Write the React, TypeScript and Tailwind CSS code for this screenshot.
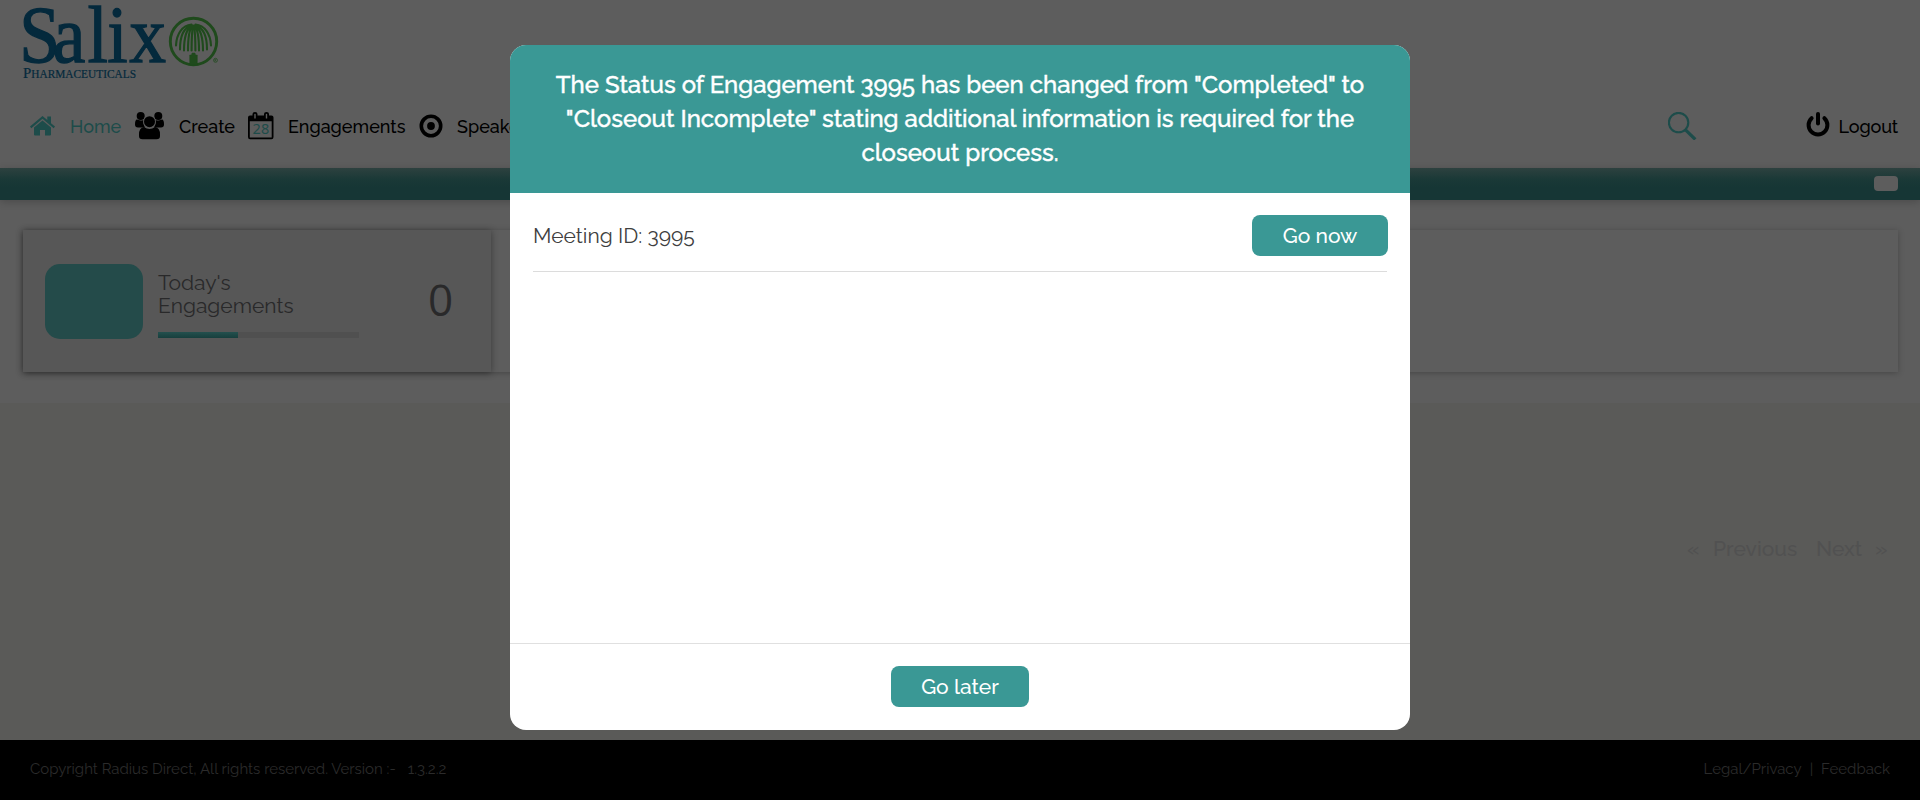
import type { ReactNode } from "react";

function Logo() {
  return (
    <svg className="block h-[84px] w-[200px] overflow-visible" viewBox="0 0 200 84">
      <g fill="#04293c" fontFamily="'Liberation Serif', serif" stroke="#04293c">
        <text transform="scale(.92 1)" x="-4.200 32.300 70 91.500 115.500" y="61.500" fontSize="80" fontWeight="400" strokeWidth="1.300">
          Salix
        </text>
        <text x="0" y="77.800" fontSize="11.500" fontWeight="400" textLength="113" lengthAdjust="spacingAndGlyphs" strokeWidth="0.2">
          <tspan fontSize="15">P</tspan>HARMACEUTICALS
        </text>
      </g>
      <g transform="translate(170.500 41.500)" fill="none" stroke="#1f4a1c" strokeLinecap="round">
        <circle r="23.200" strokeWidth="2.900" />
        <path
          strokeWidth="2.100"
          d="M-2-17C-11-16-17-8-17.500 4M-2-16C-9-14-13.500-6-13.500 8M-1.500-16C-6.500-13-9.500-4-9.500 9M-1-16C-4.500-12-5.500-4-5.500 9M2-17C11-16 17-8 17.500 4M2-16C9-14 13.500-6 13.500 8M1.500-16C6.500-13 9.500-4 9.500 9M1-16C4.500-12 5.500-4 5.500 9M-.5-16C-1.900-8-1.900 0-1.900 9M.5-16C1.900-8 1.900 0 1.900 9"
        />
        <path d="M-3.800 23V13.500H-2L-1.500 11.500H1.500L2 13.500H3.800V23Z" fill="#1f4a1c" strokeWidth="0.5" />
      </g>
      <circle cx="192.500" cy="60.300" r="2" fill="none" stroke="#1f4a1c" strokeWidth="0.700" />
      <path d="M191.900 61.500V59.300H192.800Q193.400 59.900 192.700 60.400H191.900M192.700 60.400L193.300 61.500" fill="none" stroke="#1f4a1c" strokeWidth="0.500" />
    </svg>
  );
}

function HomeIcon() {
  return (
    <svg className="h-[20px] w-[25px] shrink-0" viewBox="0 0 25 20" fill="#1d4c4a">
      <path d="M12.500 0 0 10.600 1.300 12.200 12.500 2.800 23.700 12.200 25 10.600 21 7.200V.6H17.300V4.100Z" />
      <path d="M12.500 4.500 4 11.600V18.500Q4 19.600 5 19.600H10V14H15V19.600H20Q21 19.600 21 18.500V11.600Z" />
    </svg>
  );
}

function UsersIcon() {
  return (
    <svg className="h-[28px] w-[29px] shrink-0" viewBox="0 0 29 28" fill="#000">
      <circle cx="5.700" cy="4" r="4" />
      <circle cx="23.300" cy="4" r="4" />
      <path d="M3 7.800Q5.500 9.200 8.300 8Q7.800 12.500 10 15.400H3Q0 15.400 0 12.500Q0 8.500 1.500 7.600ZM26 7.800Q23.500 9.200 20.700 8Q21.200 12.500 19 15.400H26Q29 15.400 29 12.500Q29 8.500 27.500 7.600Z" />
      <circle cx="14.500" cy="9.700" r="6.300" fill="#5d5d5d" />
      <circle cx="14.500" cy="9.700" r="5.500" />
      <path d="M9 14.900Q14.500 19 20 14.900Q25 15.500 25 22.500V24Q25 27.300 21.500 27.300H7.500Q4 27.300 4 24V22.500Q4 15.500 9 14.900Z" />
    </svg>
  );
}

function CalendarIcon() {
  return (
    <svg className="h-[28px] w-[26px] shrink-0" viewBox="0 0 26 28">
      <path fill="#000" d="M2 3.500H4.500V2Q4.500 0 7 0T9.500 2V3.500H16V2Q16 0 18.500 0T21 2V3.500H23.500Q25.500 3.500 25.500 5.500V25Q25.500 27.200 23.500 27.200H2Q0 27.200 0 25V5.500Q0 3.500 2 3.500Z" />
      <path fill="#5d5d5d" d="M1.800 9.300H23.700V25.400H1.800ZM6.300 2.200Q6.300 1.700 7 1.700T7.700 2.200V6.500H6.300ZM17.800 2.200Q17.800 1.700 18.500 1.700T19.200 2.200V6.500H17.800Z" />
      <text x="12.900" y="21.700" textAnchor="middle" fontSize="14.500" fontWeight="400" fontFamily="'Noto Sans', sans-serif" fill="#1d4c4a">28</text>
    </svg>
  );
}

function TargetIcon() {
  return (
    <svg className="h-6 w-6 shrink-0" viewBox="0 0 24 24">
      <circle cx="12" cy="12" r="9.700" fill="none" stroke="#000" strokeWidth="3.600" />
      <circle cx="12" cy="12" r="3.900" fill="#000" />
    </svg>
  );
}

function SearchIcon() {
  return (
    <svg className="h-[28px] w-[29px]" viewBox="0 0 29 28" fill="none" stroke="#1d4c4a">
      <circle cx="10.600" cy="10.600" r="9.700" strokeWidth="2.100" />
      <path d="M17.300 17.700 27.300 27.400" strokeWidth="3.200" />
    </svg>
  );
}

function PowerIcon() {
  return (
    <svg className="h-[26px] w-[24px]" viewBox="0 0 24 26" fill="none" stroke="#000" strokeWidth="4" strokeLinecap="round">
      <path d="M5.600 6.200A9.400 9.400 0 1 0 18.400 6.200" />
      <path d="M12 2V11.500" />
    </svg>
  );
}

function TealButton({ className, children }: { className: string; children: ReactNode }) {
  return <button className={`h-[41px] rounded-lg bg-[#3a9895] text-[21px] leading-[33px] font-medium text-white ${className}`}>{children}</button>;
}

function StatusModal() {
  return (
    <div className="absolute top-[45px] left-1/2 flex h-[685px] w-[900px] -translate-x-1/2 flex-col overflow-hidden rounded-2xl bg-white">
      <header className="h-[148px] bg-[#3a9895] pt-[23px] text-center text-2xl leading-[34px] font-medium text-white [-webkit-text-stroke:0.4px_white]">
        <p>The Status of Engagement 3995 has been changed from "Completed" to</p>
        <p>"Closeout Incomplete" stating additional information is required for the</p>
        <p>closeout process.</p>
      </header>
      <div className="flex-1 px-[23px] pt-[22px]">
        <div className="flex h-[57px] justify-between border-b border-[#dcdcdc]">
          <p className="text-[21px] leading-[42px] text-[#404040]">Meeting ID: 3995</p>
          <TealButton className="-mr-px w-[136px]">Go now</TealButton>
        </div>
      </div>
      <footer className="flex h-[87px] justify-center border-t border-[#e0e0e0] pt-[22px]">
        <TealButton className="w-[138px]">Go later</TealButton>
      </footer>
    </div>
  );
}

export default function App() {
  return (
    <div className="relative flex h-[800px] w-full flex-col overflow-hidden bg-[#5a5a58] font-['Raleway','Lato',sans-serif]">
      <header className="h-[168px] shrink-0 bg-[#5d5d5d]">
        <div className="h-[84px] pl-[23px]">
          <Logo />
        </div>
        <div className="flex h-[84px] items-start justify-between pt-[28px] pr-[22px] pl-[30px] text-lg leading-[29px] font-medium text-black">
          <nav className="flex h-7">
            <a className="flex w-[105px] items-center gap-[15px] text-[#1d4c4a]">
              <HomeIcon />
              Home
            </a>
            <a className="flex w-[113px] items-center gap-[15px]">
              <UsersIcon />
              Create
            </a>
            <a className="flex w-[171px] items-center gap-[14px]">
              <CalendarIcon />
              Engagements
            </a>
            <a className="flex items-center gap-[14px]">
              <TargetIcon />
              Speaker
            </a>
          </nav>
          <div className="flex">
            <SearchIcon />
            <a className="ml-[109px] flex gap-[9px] tracking-[-0.15px]">
              <PowerIcon />
              Logout
            </a>
          </div>
        </div>
      </header>
      <div className="z-0 flex h-8 shrink-0 justify-end bg-[#163635] bg-linear-to-b from-[#2d413f] via-[#1a3937] via-35% to-[#163635] to-60% pt-2 pr-[22px] shadow-[0_2px_8px_rgba(0,0,0,0.2)]">
        <span className="h-[15px] w-[24px] rounded-[4px] bg-[#5d5d5d]" />
      </div>
      <main className="h-[203px] shrink-0 bg-[#5d5d5d] pt-[30px] pr-[22px] pl-[23px]">
        <section className="h-[142px] bg-[#5d5d5d] shadow-[0_1px_6px_rgba(0,0,0,0.25)]">
          <article className="flex h-[142px] w-[468px] bg-[#575757] pl-[22px] text-[#29292a] shadow-[0_1px_7px_rgba(0,0,0,0.4)]">
            <div className="mt-[34px] h-[75px] w-[98px] rounded-[15px] bg-[#244b4a]" />
            <div className="ml-[15px] w-[201px] pt-[41px]">
              <p className="text-[21px] leading-[23px]">
                Today's
                <br />
                Engagements
              </p>
              <div className="mt-[15px] h-1.5 bg-[#505050]">
                <div className="h-full w-20 bg-linear-to-b from-[#24504e] to-[#173f3d]" />
              </div>
            </div>
            <p className="ml-[69px] pt-[39px] font-['Open_Sans',sans-serif] text-[44px] leading-[60px]">0</p>
          </article>
        </section>
      </main>
      <div className="flex flex-1 justify-end pt-[130px] pr-[33px] text-[21px] leading-8 font-medium text-[#515151]">
        <span className="w-[26px]">«</span>
        <span className="w-[103px]">Previous</span>
        <span className="w-[59px]">Next</span>
        <span className="w-[12px]">»</span>
      </div>
      <footer className="flex h-[60px] shrink-0 justify-between bg-black pr-[30px] pl-[30px] text-[15px] leading-[58px] text-[#2b2b2b]">
        <p>
          Copyright Radius Direct, All rights reserved. Version :-<span className="ml-3">1.3.2.2</span>
        </p>
        <p className="flex gap-2">
          <span>Legal/Privacy</span>
          <span>|</span>
          <span>Feedback</span>
        </p>
      </footer>
      <StatusModal />
    </div>
  );
}
